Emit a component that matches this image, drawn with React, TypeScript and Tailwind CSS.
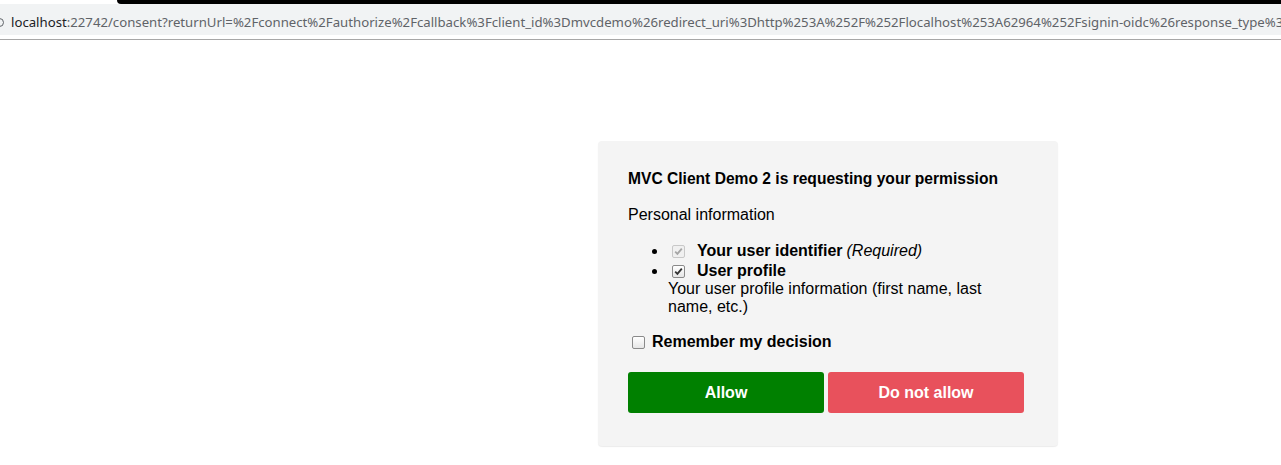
import React from "react";

const URL_HOST = "localhost";
const URL_REST =
  ":22742/consent?returnUrl=%2Fconnect%2Fauthorize%2Fcallback%3Fclient_id%3Dmvcdemo%26redirect_uri%3Dhttp%253A%252F%252Flocalhost%253A62964%252Fsignin-oidc%26response_type%3Dcode%2520id_token%26scope%3Dopenid%2520profile%26response_mode%3Dform_post";

function Box({ checked, disabled }: { checked?: boolean; disabled?: boolean }) {
  return (
    <span
      className={
        "inline-block w-[13px] h-[13px] rounded-[2px] border shrink-0 relative " +
        (disabled
          ? "border-[#c8c8c8] bg-[#f0f0f0]"
          : "border-[#8a8a8a] bg-gradient-to-b from-[#ffffff] to-[#e6e6e6]")
      }
    >
      {checked && (
        <svg viewBox="0 0 13 13" className="absolute left-[-1px] top-[-1px] w-[13px] h-[13px]">
          <path
            d="M3.2 6.6 L5.4 8.8 L9.8 3.6"
            fill="none"
            stroke={disabled ? "#a6a6a6" : "#333333"}
            strokeWidth="1.8"
          />
        </svg>
      )}
    </span>
  );
}

export default function App() {
  return (
    <div className="min-h-[465px] w-full bg-white overflow-hidden">
      {/* browser chrome */}
      <div className="flex h-[4px]">
        <div className="w-[117px] bg-white" />
        <div className="flex-1 bg-black rounded-bl-[6px]" />
      </div>
      <div className="flex items-center h-[31px] bg-[#f1f3f4] overflow-hidden relative">
        <div className="absolute left-[-5px] top-[14px] w-[9px] h-[9px] rounded-full border-[1.5px] border-[#5f6368]" />
        <div
          className="pl-[11px] whitespace-nowrap text-[13.2px] leading-none pt-[7px]"
          style={{ fontFamily: '"Noto Sans", "Open Sans", sans-serif' }}
        >
          <span className="text-[#202124]">{URL_HOST}</span>
          <span className="text-[#5f6368]">{URL_REST}</span>
        </div>
      </div>
      <div className="h-[4px] bg-white" />
      <div className="h-[1px] bg-[#a7a7a7]" />
      <div className="h-[1px] bg-white" />

      {/* content */}
      <div
        className="pl-[598px] pt-[100px] text-black"
        style={{ fontFamily: '"Liberation Sans", Arial, sans-serif' }}
      >
        <div className="w-[460px] bg-[#f4f4f4] rounded-[4px] shadow-[0_1px_1px_rgba(0,0,0,0.08)] px-[30px] pt-[29px] pb-[33px]">
          <div className="text-[15.6px] leading-[18px] font-bold">
            MVC Client Demo 2 is requesting your permission
          </div>
          <div className="mt-[18px] text-[16px] leading-[18px]">Personal information</div>
          <ul className="mt-[17px] list-disc pl-[40px] text-[16px]">
            <li className="leading-[20px]">
              <span className="inline-flex items-center h-[20px] align-top">
                <span className="ml-[4px] mr-[12px] flex">
                  <Box checked disabled />
                </span>
                <span className="font-bold">Your user identifier</span>
                <em className="ml-[4px]">(Required)</em>
              </span>
            </li>
            <li className="leading-[20px]">
              <span className="inline-flex items-center h-[20px] align-top">
                <span className="ml-[4px] mr-[12px] flex">
                  <Box checked />
                </span>
                <span className="font-bold">User profile</span>
              </span>
              <div className="leading-[18px] -mt-[1px]">
                Your user profile information (first name, last name, etc.)
              </div>
            </li>
          </ul>
          <div className="mt-[17px] flex items-center h-[18px] text-[16px] leading-[18px]">
            <span className="ml-[4px] mr-[7px] flex">
              <Box />
            </span>
            <span className="font-bold">Remember my decision</span>
          </div>
          <div className="mt-[21px] flex gap-[4px]">
            <button className="w-[196px] h-[41px] rounded-[3px] bg-[#008000] text-white font-bold text-[16px]">
              Allow
            </button>
            <button className="w-[196px] h-[41px] rounded-[3px] bg-[#e8515c] text-white font-bold text-[16px]">
              Do not allow
            </button>
          </div>
        </div>
      </div>
    </div>
  );
}
